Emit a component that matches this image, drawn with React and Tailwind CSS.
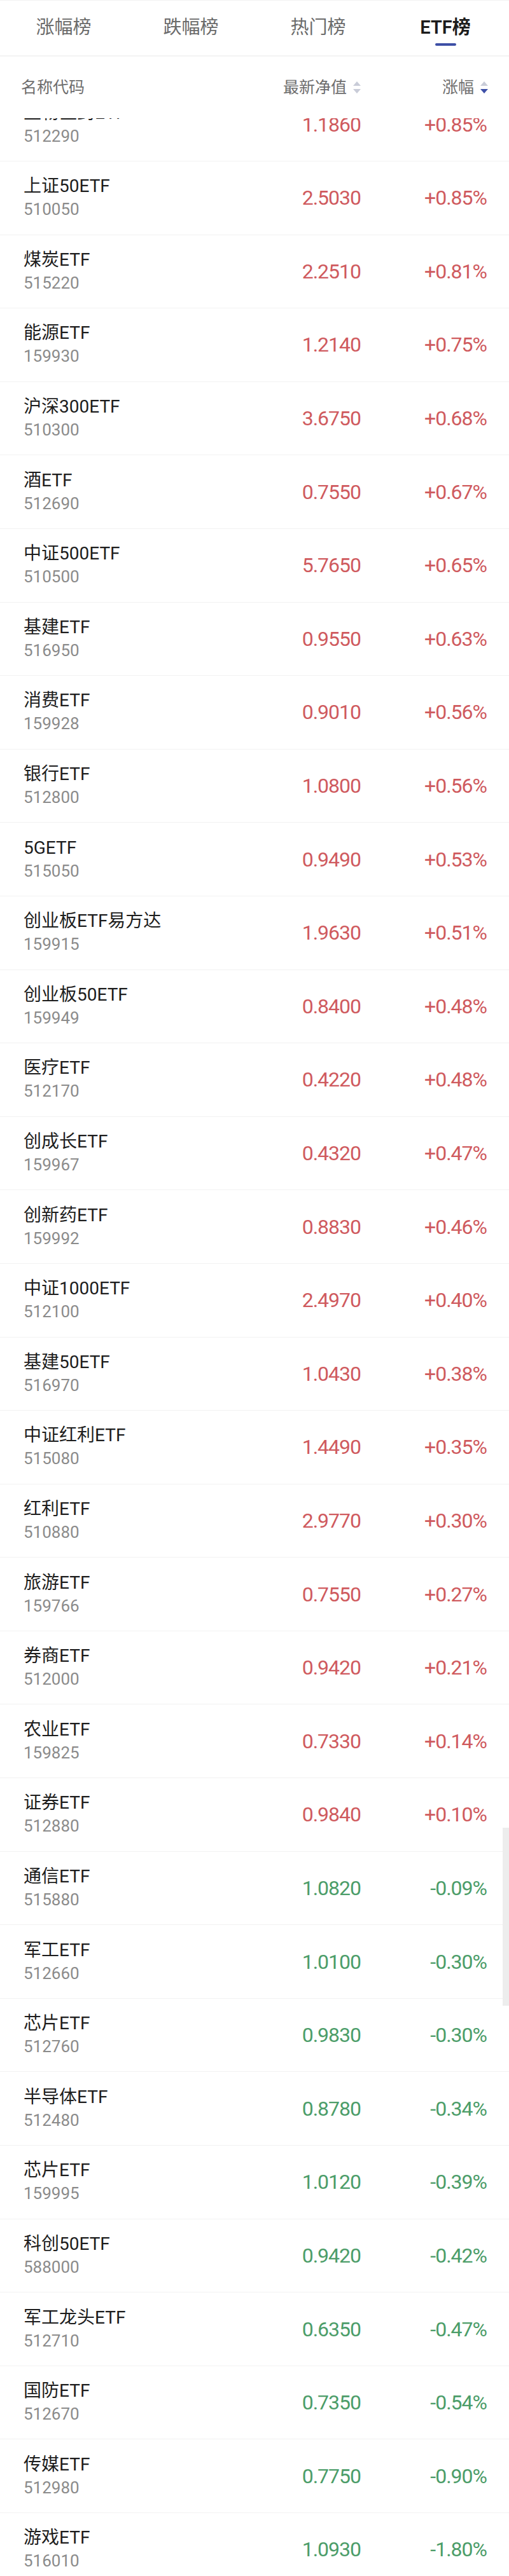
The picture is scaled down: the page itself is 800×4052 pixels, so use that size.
import { useState } from 'react'

const tabs = ['涨幅榜', '跌幅榜', '热门榜', 'ETF榜']

const rows = [
  ['生物医药ETF', '512290', '1.1860', '+0.85%'],
  ['上证50ETF', '510050', '2.5030', '+0.85%'],
  ['煤炭ETF', '515220', '2.2510', '+0.81%'],
  ['能源ETF', '159930', '1.2140', '+0.75%'],
  ['沪深300ETF', '510300', '3.6750', '+0.68%'],
  ['酒ETF', '512690', '0.7550', '+0.67%'],
  ['中证500ETF', '510500', '5.7650', '+0.65%'],
  ['基建ETF', '516950', '0.9550', '+0.63%'],
  ['消费ETF', '159928', '0.9010', '+0.56%'],
  ['银行ETF', '512800', '1.0800', '+0.56%'],
  ['5GETF', '515050', '0.9490', '+0.53%'],
  ['创业板ETF易方达', '159915', '1.9630', '+0.51%'],
  ['创业板50ETF', '159949', '0.8400', '+0.48%'],
  ['医疗ETF', '512170', '0.4220', '+0.48%'],
  ['创成长ETF', '159967', '0.4320', '+0.47%'],
  ['创新药ETF', '159992', '0.8830', '+0.46%'],
  ['中证1000ETF', '512100', '2.4970', '+0.40%'],
  ['基建50ETF', '516970', '1.0430', '+0.38%'],
  ['中证红利ETF', '515080', '1.4490', '+0.35%'],
  ['红利ETF', '510880', '2.9770', '+0.30%'],
  ['旅游ETF', '159766', '0.7550', '+0.27%'],
  ['券商ETF', '512000', '0.9420', '+0.21%'],
  ['农业ETF', '159825', '0.7330', '+0.14%'],
  ['证券ETF', '512880', '0.9840', '+0.10%'],
  ['通信ETF', '515880', '1.0820', '-0.09%'],
  ['军工ETF', '512660', '1.0100', '-0.30%'],
  ['芯片ETF', '512760', '0.9830', '-0.30%'],
  ['半导体ETF', '512480', '0.8780', '-0.34%'],
  ['芯片ETF', '159995', '1.0120', '-0.39%'],
  ['科创50ETF', '588000', '0.9420', '-0.42%'],
  ['军工龙头ETF', '512710', '0.6350', '-0.47%'],
  ['国防ETF', '512670', '0.7350', '-0.54%'],
  ['传媒ETF', '512980', '0.7750', '-0.90%'],
  ['游戏ETF', '516010', '1.0930', '-1.80%'],
]

const font = { fontFamily: 'Roboto, "Noto Sans CJK SC", sans-serif' }

function SortIcon({ active }) {
  return (
    <span className="ml-[10px] flex flex-col items-center gap-[5px]">
      <svg width="12" height="7" viewBox="0 0 12 7">
        <path d="M6 0 L12 7 L0 7 Z" fill="#c9ccd8" />
      </svg>
      <svg width="12" height="7" viewBox="0 0 12 7">
        <path d="M0 0 L12 0 L6 7 Z" fill={active ? '#3f51a8' : '#c9ccd8'} />
      </svg>
    </span>
  )
}

export default function App() {
  const [tab, setTab] = useState(3)

  return (
    <div className="relative h-[4052px] w-full overflow-hidden bg-white" style={font}>
      {/* Tabs */}
      <div className="relative z-20 flex h-[89px] border-t border-b-2 border-t-[#f2f2f2] border-b-[#f3f3f3] bg-white">
        {tabs.map((t, i) => (
          <button
            key={t}
            onClick={() => setTab(i)}
            className="flex flex-1 flex-col items-center pt-[25px]"
          >
            <span
              className={`text-[29px] leading-[34px] ${
                i === tab ? 'font-semibold text-[#1c1c1c]' : 'text-[#6b6b6b]'
              }`}
            >
              {t}
            </span>
            {i === tab && <span className="mt-[8px] h-[4px] w-[33px] rounded-full bg-[#3d4fa6]" />}
          </button>
        ))}
      </div>

      {/* Column header */}
      <div className="relative z-10 flex h-[97px] items-center bg-white pl-[33px] pr-[33px] text-[25px] text-[#6e6e6e]">
        <div className="flex-1">名称代码</div>
        <div className="flex w-[180px] items-center justify-end">
          最新净值
          <SortIcon />
        </div>
        <div className="flex w-[200px] items-center justify-end">
          涨幅
          <SortIcon active />
        </div>
      </div>

      {/* List */}
      <div className="-mt-[47.6px]">
        {rows.map(([name, code, price, pct], i) => {
          const up = pct.startsWith('+')
          const color = up ? 'text-[#cf5a5e]' : 'text-[#4c9d69]'
          return (
            <div
              key={code + i}
              className="flex h-[115.6px] items-center border-b border-[#f2f2f2] pl-[37px] pr-[35px]"
            >
              <div className="flex flex-1 flex-col">
                <span className="text-[28px] leading-[37px] text-[#1d1d1d]">{name}</span>
                <span className="text-[26px] leading-[37px] text-[#8b8b8b]">{code}</span>
              </div>
              <div className={`w-[180px] text-right text-[32px] tracking-[-1px] ${color}`}>{price}</div>
              <div className={`w-[198px] text-right text-[32px] tracking-[-1px] ${color}`}>{pct}</div>
            </div>
          )
        })}
      </div>

      {/* scrollbar thumb */}
      <div className="absolute right-0 top-[2875px] h-[280px] w-[10px] bg-[#ededed]" />
    </div>
  )
}
